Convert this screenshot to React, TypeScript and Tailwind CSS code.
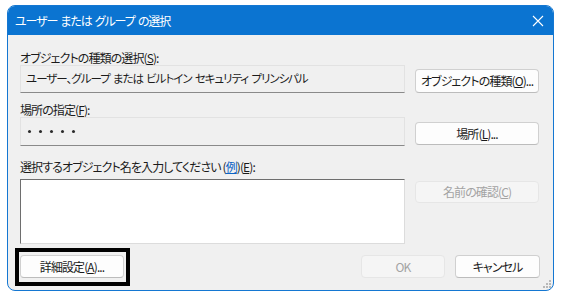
import React from "react";

const font =
  "font-['Noto_Sans_CJK_JP','Noto_Sans',sans-serif] [font-feature-settings:'palt'] tracking-[-0.9px]";

function Btn({
  children,
  className = "",
  disabled = false,
}: {
  children: React.ReactNode;
  className?: string;
  disabled?: boolean;
}) {
  return (
    <div
      className={`flex items-center justify-center whitespace-nowrap rounded-[4px] border text-[12px] ${
        disabled
          ? "border-[#e6e6e6] bg-[#f5f5f5] text-[#a3a3a3]"
          : "border-[#d0d0d0] border-b-[#bcbcbc] bg-[#fdfdfd] text-[#1b1b1b]"
      } ${className}`}
    >
      {children}
    </div>
  );
}

export default function App() {
  return (
    <div className={`w-[561px] h-[302px] bg-white pt-[5px] pl-[7px] ${font}`}>
      <div className="relative w-[547px] h-[286px] border border-[#1477d2] rounded-[8px] overflow-hidden bg-[#f0f0f0] flex flex-col">
        {/* title bar */}
        <div className="h-[29px] bg-[#0b74d1] flex items-center justify-between pl-[7px] pr-[9px] text-white text-[12px]">
          <span className="tracking-[-1.1px] whitespace-pre">ユーザー  または  グループ  の選択</span>
          <svg width="12" height="12" viewBox="0 0 12 12">
            <path d="M1 1L11 11M11 1L1 11" stroke="#fff" strokeWidth="1.1" />
          </svg>
        </div>

        <div className="flex flex-col pl-[12px] pr-[13px] text-[12px] text-[#1b1b1b]">
          <div className="mt-[15px] leading-[15px]">
            オブジェクトの種類の選択(<u>S</u>):
          </div>
          <div className="flex items-end gap-[10px]">
            <div className="w-[385px] h-[28px] border border-[#e2e2e2] border-b-[#8a8a8a] flex items-center pl-[5px] whitespace-pre text-[11.5px] tracking-[-1px]">
              ユーザー、グループ  または  ビルトイン  セキュリティ  プリンシパル
            </div>
            <Btn className="w-[124px] h-[24px]">
              オブジェクトの種類(<u>O</u>)...
            </Btn>
          </div>

          <div className="mt-[9px] leading-[15px]">
            場所の指定(<u>F</u>):
          </div>
          <div className="flex items-start gap-[10px]">
            <div className="w-[385px] h-[29px] border border-[#e2e2e2] border-b-[#8a8a8a] flex items-center pl-[7px] gap-[8px]">
              {[0, 1, 2, 3, 4].map((i) => (
                <span key={i} className="w-[3px] h-[3px] rounded-full bg-[#2a2a2a]" />
              ))}
            </div>
            <Btn className="w-[124px] h-[23px] mt-[5px]">
              場所(<u>L</u>)...
            </Btn>
          </div>

          <div className="mt-[13px] leading-[15px] mb-[5px]">
            選択するオブジェクト名を入力してください (
            <u className="text-[#0a62c4]">例</u>)(<u>E</u>):
          </div>
          <div className="flex items-start gap-[10px]">
            <div className="w-[385px] h-[65px] bg-white border border-[#dcdcdc] border-t-[#6e6e6e] border-l-[#6e6e6e]" />
            <Btn disabled className="w-[124px] h-[22px] mt-[2px]">
              名前の確認(<u>C</u>)
            </Btn>
          </div>

          <div className="mt-[11px] flex items-center">
            <div className="relative">
              <Btn className="w-[104px] h-[23px]">
                詳細設定(<u>A</u>)...
              </Btn>
              <div className="absolute -left-[5px] -right-[6px] -top-[7px] -bottom-[8px] border-[4px] border-black" />
            </div>
            <div className="flex-1" />
            <Btn disabled className="w-[84px] h-[23px]">
              OK
            </Btn>
            <Btn className="w-[85px] h-[23px] ml-[10px]">キャンセル</Btn>
          </div>
        </div>

        <svg
          className="absolute right-[1px] bottom-[1px]"
          width="10"
          height="10"
          viewBox="0 0 10 10"
        >
          {[
            [7, 1],
            [4, 4],
            [7, 4],
            [1, 7],
            [4, 7],
            [7, 7],
          ].map(([x, y], i) => (
            <rect key={i} x={x} y={y} width="2" height="2" fill="#b8b8b8" />
          ))}
        </svg>
      </div>
    </div>
  );
}
